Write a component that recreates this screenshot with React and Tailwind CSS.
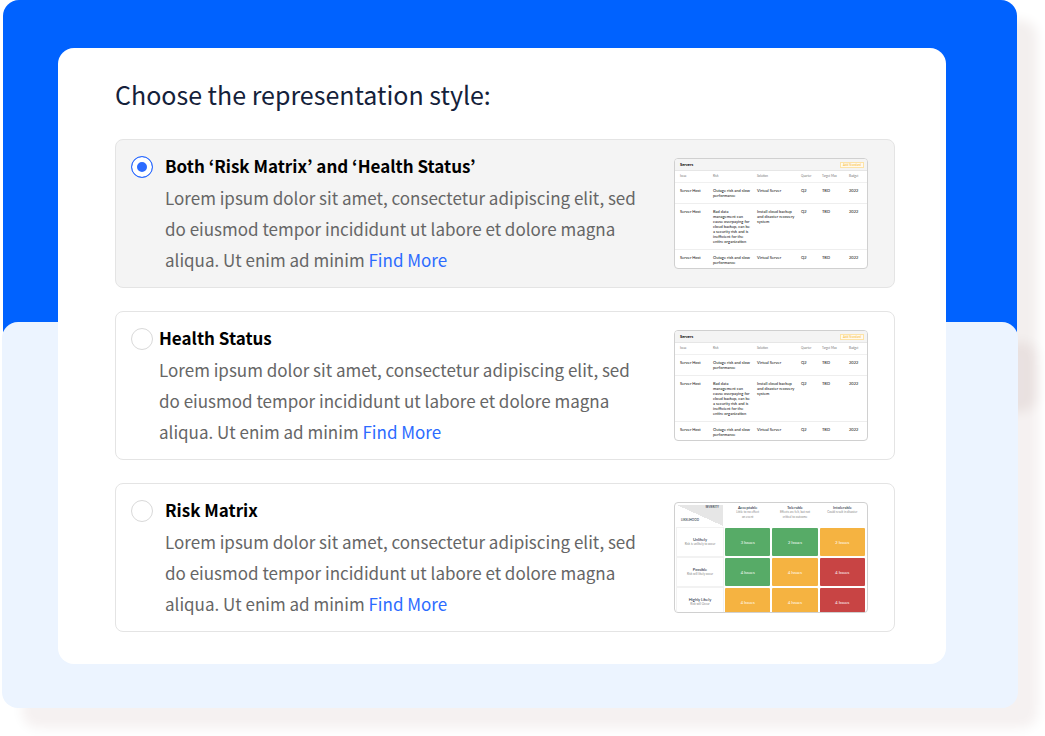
import React, { useState } from 'react';

const options = [
  {
    id: 'both',
    title: 'Both ‘Risk Matrix’ and ‘Health Status’',
    preview: 'table',
    gap: 'gap-3',
  },
  { id: 'health', title: 'Health Status', preview: 'table', gap: 'gap-1.5' },
  { id: 'matrix', title: 'Risk Matrix', preview: 'matrix', gap: 'gap-3' },
];

const columns = [
  { name: 'Issue', width: 'w-[38px] pl-[5px]' },
  { name: 'Risk', width: 'w-[44px]' },
  { name: 'Solution', width: 'w-[44px]' },
  { name: 'Quarter', width: 'w-[21px]' },
  { name: 'Target Max', width: 'w-[27px]' },
  { name: 'Budget', width: 'w-[18px]' },
];

const outage = ['Server Host', 'Outage risk and slow\nperformance', 'Virtual Server', 'Q2', 'TBD', '2022'];

const servers = [
  outage,
  [
    'Server Host',
    'Bad data\nmanagement can\ncause overpaying for\ncloud backup, can be\na security risk and is\ninefficient for the\nentire organization',
    'Install cloud backup\nand disaster recovery\nsystem',
    'Q2',
    'TBD',
    '2022',
  ],
  outage,
];

const severities = [
  { name: 'Acceptable', note: 'Little to no effect\non event' },
  { name: 'Tolerable', note: 'Effects are felt, but not\ncritical to outcome' },
  { name: 'Intolerable', note: 'Could result in disaster' },
];

const tones = {
  green: 'bg-[#57ab67]',
  amber: 'bg-[#f5b341]',
  red: 'bg-[#c84444]',
};

const likelihoods = [
  {
    name: 'Unlikely',
    note: 'Risk is unlikely to occur',
    cells: [['green', '3 Issues'], ['green', '2 Issues'], ['amber', '2 Issues']],
  },
  {
    name: 'Possible',
    note: 'Risk will likely occur',
    cells: [['green', '4 Issues'], ['amber', '4 Issues'], ['red', '4 Issues']],
  },
  {
    name: 'Highly Likely',
    note: 'Risk will Occur',
    cells: [['amber', '4 Issues'], ['amber', '4 Issues'], ['red', '4 Issues']],
  },
];

const ServerTable = () => (
  <div>
    <div className="flex h-[12px] items-center justify-between border-b border-[#e6e6e6] bg-[#f4f4f4] pl-[5px] pr-[3px]">
      <span className="text-[4px] leading-[5px] font-bold text-black">Servers</span>
      <button
        type="button"
        className="border border-[#fde3a7] bg-[#fffaf0] px-[2px] text-[3px] leading-[4px] font-medium text-[#f9bf3c]"
      >
        Add Standard
      </button>
    </div>
    <table className="w-full table-fixed border-collapse text-left text-[4px] leading-[5px]">
      <thead>
        <tr className="h-[11px] border-b border-[#f0f0f0]">
          {columns.map(column => (
            <th
              key={column.name}
              className={`${column.width} whitespace-nowrap text-[3px] leading-[5px] font-normal text-[#777777]`}
            >
              {column.name}
            </th>
          ))}
        </tr>
      </thead>
      <tbody>
        {servers.map((row, i) => (
          <tr key={i} className="border-b border-[#eeeeee] align-top">
            {row.map((cell, j) => (
              <td
                key={j}
                className="py-[5px] font-medium whitespace-pre text-[#222222] first:pl-[5px]"
              >
                {cell}
              </td>
            ))}
          </tr>
        ))}
      </tbody>
    </table>
  </div>
);

const RiskMatrix = () => (
  <table className="w-full table-fixed border-separate border-spacing-[2px] text-center text-[4px] leading-[5px]">
    <thead>
      <tr className="h-[21px] align-top">
        <th className="w-[46px] bg-[linear-gradient(to_top_right,transparent_50%,#e6e6e6_50%)] text-[3px] leading-[5px] font-medium text-[#222c3c]">
          <div className="flex h-[18px] flex-col justify-between px-1">
            <span className="text-right">SEVERITY</span>
            <span className="text-left">LIKELIHOOD</span>
          </div>
        </th>
        {severities.map(severity => (
          <th key={severity.name} className="font-medium text-[#222c3c]">
            {severity.name}
            <div className="text-[3px] leading-[5px] font-normal whitespace-pre text-[#888888]">
              {severity.note}
            </div>
          </th>
        ))}
      </tr>
    </thead>
    <tbody>
      {likelihoods.map(row => (
        <tr key={row.name} className="h-[28px]">
          <th className="font-medium text-[#222c3c] shadow-[0_0_0_1px_#f2f2f2]">
            {row.name}
            <div className="text-[3px] leading-[5px] font-normal whitespace-pre text-[#888888]">
              {row.note}
            </div>
          </th>
          {row.cells.map(([tone, label], i) => (
            <td key={i} className={`${tones[tone]} rounded-[1px] font-medium text-white/90`}>
              {label}
            </td>
          ))}
        </tr>
      ))}
    </tbody>
  </table>
);

const OptionCard = ({ option, checked, onSelect }) => (
  <div
    className={`flex items-start gap-7 rounded-lg border border-[#e4e4e4] pt-2.5 pr-[26px] pb-3 pl-[15px] ${
      checked ? 'bg-[#f4f4f4]' : 'bg-white'
    }`}
  >
    <div className={`flex min-w-0 flex-1 items-start ${option.gap}`}>
      <input
        type="radio"
        name="style"
        id={option.id}
        checked={checked}
        onChange={() => onSelect(option.id)}
        className="mt-[6px] size-[22px] shrink-0 appearance-none rounded-full border border-[#d9d9d9] bg-white checked:border-[#2c6bff] checked:bg-[#2c6bff] checked:shadow-[inset_0_0_0_5px_white]"
      />
      <div className="min-w-0 flex-1">
        <label htmlFor={option.id} className="block text-[17px] leading-8 font-bold text-black">
          {option.title}
        </label>
        <p className="text-[17px] leading-[31px] text-[#666666]">
          Lorem ipsum dolor sit amet, consectetur adipiscing elit, sed do eiusmod tempor incididunt
          ut labore et dolore magna aliqua. Ut enim ad minim{' '}
          <a href="#more" className="text-[#2c6bff]">
            Find More
          </a>
        </p>
      </div>
    </div>
    <div className="mt-2 h-[111px] w-[194px] shrink-0 overflow-hidden rounded-[4px] border border-[#d0d0d0] bg-white font-[Lato,sans-serif]">
      {option.preview === 'table' ? <ServerTable /> : <RiskMatrix />}
    </div>
  </div>
);

const App = () => {
  const [selected, setSelected] = useState('both');

  return (
    <div className="bg-white pr-[27px] pb-7 pl-[2px] font-['Noto_Sans_CJK_KR',sans-serif]">
      {/* Blue and pale backdrops share the grid with the panel */}
      <div className="grid grid-cols-1 grid-rows-[322px_70px_1fr]">
        <div className="col-start-1 row-start-1 row-end-3 mx-px rounded-2xl bg-[#0062ff] shadow-[20px_20px_12px_#f3efee]" />
        <div className="col-start-1 row-start-2 row-end-4 rounded-2xl bg-[#ecf4ff] shadow-[20px_20px_12px_rgba(80,20,10,0.06)]" />
        <main className="col-start-1 row-start-1 row-end-4 mt-12 mr-[72px] mb-11 ml-14 rounded-2xl bg-white pt-7 pr-[51px] pb-8 pl-[57px]">
          <h1 className="text-[25px] leading-9 text-[#14213a]">Choose the representation style:</h1>
          <div className="mt-[27px] flex flex-col gap-[23px]">
            {options.map(option => (
              <OptionCard
                key={option.id}
                option={option}
                checked={selected === option.id}
                onSelect={setSelected}
              />
            ))}
          </div>
        </main>
      </div>
    </div>
  );
};

export default App;
